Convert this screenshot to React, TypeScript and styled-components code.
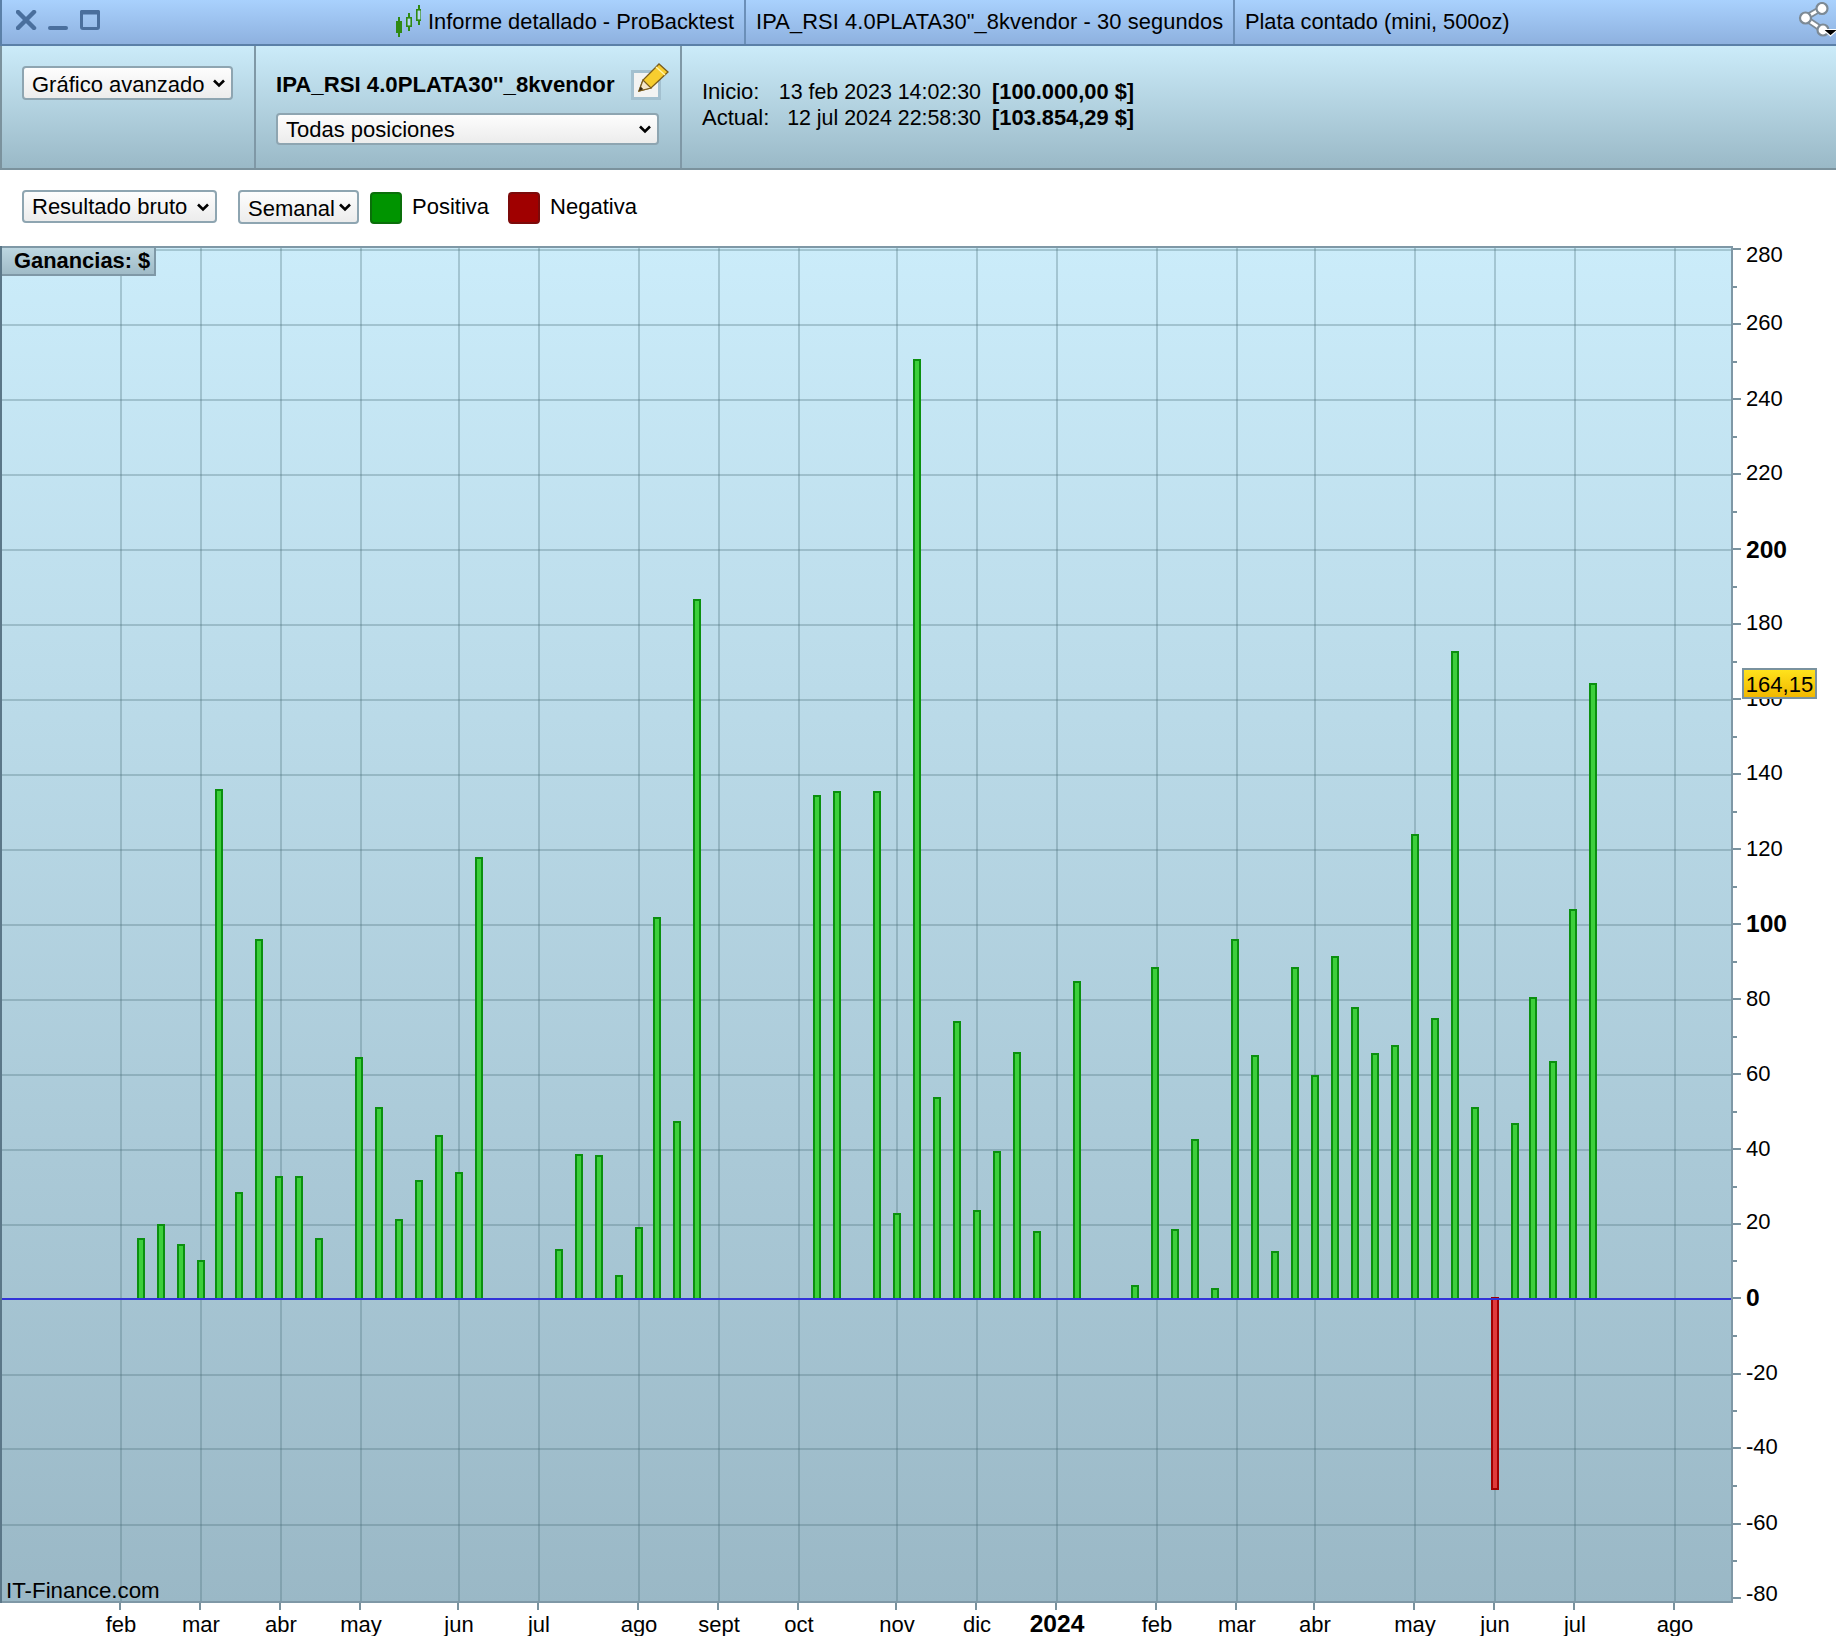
import React from "react";
import styled, { createGlobalStyle } from "styled-components";

const FONT = `"Liberation Sans", Arial, sans-serif`;

const Global = createGlobalStyle`
  html, body { margin: 0; padding: 0; background: #fff; }
  #root { width: 1836px; height: 1636px; overflow: hidden; }
  * { box-sizing: border-box; }
`;

const Page = styled.div`
  width: 1836px;
  height: 1636px;
  display: flex;
  flex-direction: column;
  font-family: ${FONT};
  color: #000;
  background: #fff;
  position: relative;
  overflow: hidden;
`;

const TitleBar = styled.header`
  height: 46px;
  flex: none;
  display: flex;
  align-items: stretch;
  background: linear-gradient(#a9d1fd, #8eb1df);
  border-bottom: 2px solid #5b80a8;
  border-left: 2px solid #5b80a8;
  font-size: 21.85px;
  position: relative;
`;

const WindowControls = styled.div`
  width: 393px;
  flex: none;
  padding: 10px 0 0 14px;
  display: flex;
  align-items: flex-start;
`;

const TitleTab = styled.div<{ $w: number; $pad: number; $border?: boolean; $track?: number }>`
  width: ${(p) => p.$w}px;
  padding-left: ${(p) => p.$pad}px;
  letter-spacing: ${(p) => p.$track ?? 0}px;
  display: flex;
  align-items: center;
  white-space: nowrap;
  flex: none;
  border-right: ${(p) => (p.$border ? "2px solid #6b8fb8" : "none")};
`;

const CandleSvg = styled.svg`
  flex: none;
  margin: -4px 7px 0 0;
`;

const ShareSlot = styled.div`
  position: absolute;
  right: 0;
  top: 2px;
  width: 38px;
  height: 36px;
`;

const Toolbar = styled.section`
  height: 124px;
  flex: none;
  display: flex;
  background: linear-gradient(#cbebf9, #9ab9c7);
  border-bottom: 2px solid #7b929d;
  border-left: 2px solid #7b929d;
  font-size: 22px;
`;

const FirstCell = styled.div`
  width: 254px;
  flex: none;
  display: flex;
  flex-direction: column;
  padding: 20px 0 0 20px;
  border-right: 2px solid #7f98a6;
`;

const StrategyCell = styled.div`
  width: 426px;
  flex: none;
  display: flex;
  flex-direction: column;
  padding: 18px 0 0 20px;
  border-right: 2px solid #7f98a6;
`;

const InfoCell = styled.div`
  flex: 1;
  display: flex;
  flex-direction: column;
  padding: 33px 0 0 20px;
  line-height: 26px;
`;

const NameRow = styled.div`
  display: flex;
  align-items: flex-start;
  height: 49px;
`;

const StrategyName = styled.span`
  font-weight: 700;
  font-size: 22.2px;
  margin-top: 8px;
  width: 355px;
  white-space: nowrap;
`;

const PencilSvg = styled.svg`
  flex: none;
  margin-top: -1px;
`;

const SelectWrap = styled.div<{ $w: number; $h: number; $ml?: number }>`
  position: relative;
  width: ${(p) => p.$w}px;
  height: ${(p) => p.$h}px;
  margin-left: ${(p) => p.$ml ?? 0}px;
  flex: none;
`;

const NativeSelect = styled.select<{ $pt?: number }>`
  appearance: none;
  width: 100%;
  height: 100%;
  padding: ${(p) => p.$pt ?? 0}px 0 0 8px;
  margin: 0;
  font-family: ${FONT};
  font-size: 22px;
  color: #000;
  background: linear-gradient(#fdfdfd, #ececec);
  border: 2px solid #8ea5b1;
  border-radius: 4px;
  outline: none;
`;

const Chevron = styled.svg`
  position: absolute;
  right: 7px;
  top: 50%;
  margin-top: -5px;
  width: 14px;
  height: 10px;
  pointer-events: none;
`;

const InfoRow = styled.div`
  display: flex;
  white-space: nowrap;
`;

const InfoLabel = styled.span`
  width: 76px;
`;

const InfoDate = styled.span`
  width: 203px;
  text-align: right;
  font-size: 21.4px;
`;

const InfoMoney = styled.b`
  margin-left: 11px;
  font-size: 21.85px;
`;

const FilterRow = styled.section`
  height: 76px;
  flex: none;
  display: flex;
  align-items: flex-start;
  padding: 20px 0 0 22px;
  font-size: 22px;
`;

const Swatch = styled.span<{ $bg: string; $edge: string; $ml?: number }>`
  width: 32px;
  height: 32px;
  flex: none;
  margin: 2px 0 0 ${(p) => p.$ml ?? 0}px;
  background: ${(p) => p.$bg};
  border: 2px solid ${(p) => p.$edge};
  border-radius: 4px;
`;

const Legend = styled.span`
  margin: 4px 19px 0 10px;
  line-height: 26px;
`;

const ChartArea = styled.section`
  position: relative;
  height: 1390px;
  flex: none;
`;

const ChartSvg = styled.svg`
  display: block;
`;

const ValueBadge = styled.div`
  position: absolute;
  left: 1742px;
  top: 422px;
  width: 75px;
  height: 31px;
  border: 2px solid #7a929e;
  background: linear-gradient(#ffe21c, #f1b800);
  font-size: 22px;
  line-height: 29px;
  text-align: center;
`;

const UnitBadge = styled.div`
  position: absolute;
  left: 2px;
  top: 2px;
  width: 154px;
  height: 28px;
  background: linear-gradient(#bcd6e0, #a0bbc7);
  border-right: 2px solid #7f98a6;
  border-bottom: 2px solid #7f98a6;
  font-weight: 700;
  font-size: 21.9px;
  line-height: 26px;
  padding-left: 12px;
  white-space: nowrap;
`;

const AxisText = styled.text<{ $bold?: boolean; $size?: number }>`
  font-family: ${FONT};
  font-size: ${(p) => p.$size ?? (p.$bold ? 24.6 : 22)}px;
  font-weight: ${(p) => (p.$bold ? 700 : 400)};
  fill: #000;
`;

const bars: [number, number][] = [
  [141, 1238], [161, 1224], [181, 1244], [201, 1260], [219, 789], [239, 1192], [259, 939], [279, 1176], [299, 1176], [319, 1238],
  [359, 1057], [379, 1107], [399, 1219], [419, 1180], [439, 1135], [459, 1172], [479, 857],
  [559, 1249], [579, 1154], [599, 1155], [619, 1275], [639, 1227], [657, 917], [677, 1121], [697, 599],
  [817, 795], [837, 791], [877, 791], [897, 1213], [917, 359], [937, 1097], [957, 1021], [977, 1210], [997, 1151], [1017, 1052], [1037, 1231],
  [1077, 981], [1135, 1285], [1155, 967], [1175, 1229], [1195, 1139], [1215, 1288], [1235, 939], [1255, 1055], [1275, 1251], [1295, 967],
  [1315, 1075], [1335, 956], [1355, 1007], [1375, 1053], [1395, 1045], [1415, 834], [1435, 1018], [1455, 651], [1475, 1107],
  [1515, 1123], [1533, 997], [1553, 1061], [1573, 909], [1593, 683],
];

const ZERO = 1299;
const yGrid = [250, 325, 400, 475, 550, 625, 700, 775, 850, 925, 1000, 1075, 1150, 1225, 1375, 1449, 1525];
const yTicks = [249, 324, 399, 474, 549, 624, 699, 774, 849, 924, 999, 1074, 1149, 1224, 1298, 1374, 1448, 1524, 1598];
const yLabels: [string, number, boolean?][] = [
  ["280", 254], ["260", 322], ["240", 398], ["220", 472], ["200", 550, true], ["180", 622], ["160", 698], ["140", 772], ["120", 848],
  ["100", 924, true], ["80", 998], ["60", 1073], ["40", 1148], ["20", 1221], ["0", 1298, true], ["-20", 1372], ["-40", 1446], ["-60", 1522], ["-80", 1593],
];
const months: [string, number, boolean?][] = [
  ["feb", 121], ["mar", 201], ["abr", 281], ["may", 361], ["jun", 459], ["jul", 539], ["ago", 639], ["sept", 719], ["oct", 799], ["nov", 897],
  ["dic", 977], ["2024", 1057, true], ["feb", 1157], ["mar", 1237], ["abr", 1315], ["may", 1415], ["jun", 1495], ["jul", 1575], ["ago", 1675],
];

function Arrow() {
  return (
    <Chevron viewBox="0 0 14 10">
      <path d="M2 2.5 L7 7.5 L12 2.5" fill="none" stroke="#000" strokeWidth="2.6" />
    </Chevron>
  );
}

function Select({ w, h, value, ml, pt }: { w: number; h: number; value: string; ml?: number; pt?: number }) {
  return (
    <SelectWrap $w={w} $h={h} $ml={ml}>
      <NativeSelect defaultValue={value} $pt={pt}>
        <option>{value}</option>
      </NativeSelect>
      <Arrow />
    </SelectWrap>
  );
}

function WindowIcons() {
  return (
    <svg width="84" height="20" viewBox="0 0 84 20">
      <path d="M2 2 L18 18 M18 2 L2 18" stroke="#4a6f9d" strokeWidth="4.5" strokeLinecap="round" fill="none" />
      <rect x="32" y="16" width="20" height="4" rx="2" fill="#4a6f9d" />
      <rect x="65.5" y="1.5" width="17" height="17" rx="1.5" fill="none" stroke="#4a6f9d" strokeWidth="3" />
      <rect x="64" y="0" width="20" height="4.5" rx="1.5" fill="#4a6f9d" />
    </svg>
  );
}

function CandleIcon() {
  return (
    <CandleSvg width="26" height="34" viewBox="0 0 26 34">
      <g stroke="#2f8a12" fill="none">
        <path d="M4 14 V34 M14 10 V28 M24 2 V22" strokeWidth="2" />
        <rect x="1" y="18" width="6" height="12" fill="#2f8a12" strokeWidth="0" />
        <rect x="11.8" y="14.8" width="4.4" height="8.4" fill="#b8d8f0" strokeWidth="1.6" />
        <rect x="21.8" y="6.8" width="4.4" height="10.4" fill="#b8d8f0" strokeWidth="1.6" />
      </g>
    </CandleSvg>
  );
}

function ShareIcon() {
  return (
    <svg width="38" height="36" viewBox="0 0 38 36">
      <path d="M24 6 L7 16 L25 28" stroke="#7d8a95" strokeWidth="6.5" fill="none" />
      <path d="M24 6 L7 16 L25 28" stroke="#fff" strokeWidth="3" fill="none" />
      <circle cx="24" cy="6.5" r="5.5" fill="#fff" stroke="#7d8a95" strokeWidth="2.2" />
      <circle cx="7.5" cy="16" r="5.5" fill="#fff" stroke="#7d8a95" strokeWidth="2.2" />
      <circle cx="25" cy="28" r="5.5" fill="#fff" stroke="#7d8a95" strokeWidth="2.2" />
      <path d="M25 27.5 H40 L32.5 34 Z" fill="#000" stroke="#fff" strokeWidth="1.2" />
    </svg>
  );
}

function PencilIcon() {
  return (
    <PencilSvg width="38" height="37" viewBox="0 0 38 37">
      <rect x="1.5" y="8.5" width="27" height="27" fill="#f3f3f2" stroke="#a3c0cf" strokeWidth="3" />
      <path d="M8 28 L12 17 L28 1 L37 9 L20 25 Z" fill="#f7cd2f" stroke="#7a5c1c" strokeWidth="1.3" />
      <path d="M25 4 L34 12" stroke="#fff2a8" strokeWidth="1.5" />
      <path d="M8 28 L12 17 L20 25 Z" fill="#f5e6c8" stroke="#7a5c1c" strokeWidth="1.2" />
      <path d="M8 28 L9.6 23.6 L12.4 26.2 Z" fill="#3a2a10" />
    </PencilSvg>
  );
}

function Chart() {
  const minor = yTicks.slice(0, -1).map((t, i) => Math.round((t + yTicks[i + 1]) / 2));
  return (
    <ChartSvg width="1836" height="1390" viewBox="0 246 1836 1390">
      <defs>
        <linearGradient id="plotBg" x1="0" y1="0" x2="0" y2="1">
          <stop offset="0" stopColor="#cbecfa" />
          <stop offset="1" stopColor="#9ab8c6" />
        </linearGradient>
      </defs>
      <rect x="0" y="246" width="1733" height="1357" fill="url(#plotBg)" />
      <g stroke="#4a6e78" strokeOpacity="0.3" strokeWidth="2">
        {months.map(([m, x], i) => (
          <line key={`${m}${i}`} x1={x} x2={x} y1="248" y2="1601" />
        ))}
        {yGrid.map((y) => (
          <line key={y} x1="2" x2="1731" y1={y} y2={y} />
        ))}
      </g>
      <g stroke="#0b900f" strokeWidth="2" fill="#3dcf3c">
        {bars.map(([x, top]) => (
          <rect key={x} x={x - 3} y={top + 1} width="6" height={ZERO - top - 1} />
        ))}
      </g>
      <rect x="1492" y="1298" width="6" height="191" fill="#e03b3b" stroke="#a00000" strokeWidth="2" />
      <line x1="2" x2="1732" y1="1299" y2="1299" stroke="#3233d8" strokeWidth="2" />
      <rect x="0" y="246" width="1733" height="2" fill="#7f98a6" />
      <rect x="0" y="1601" width="1733" height="2" fill="#7f98a6" />
      <rect x="0" y="246" width="2" height="1357" fill="#5b7788" />
      <rect x="1731" y="246" width="2" height="1357" fill="#7f98a6" />
      <g fill="#7a929e">
        {yTicks.map((y) => (
          <rect key={y} x="1733" y={y - 1} width="8" height="2" />
        ))}
        {minor.map((y) => (
          <rect key={y} x="1733" y={y - 1} width="4" height="2" />
        ))}
        {months.map(([m, x], i) => (
          <rect key={`${m}${i}`} x={x - 2} y="1603" width="2" height="7" />
        ))}
      </g>
      {yLabels.map(([t, y, bold]) => (
        <AxisText key={t} x="1746" y={y + 8} $bold={bold}>
          {t}
        </AxisText>
      ))}
      {months.map(([m, x, bold], i) => (
        <AxisText key={`${m}${i}`} x={x} y="1632" textAnchor="middle" $bold={bold}>
          {m}
        </AxisText>
      ))}
      <AxisText x="6" y="1598" $size={22.3}>IT-Finance.com</AxisText>
    </ChartSvg>
  );
}

export default function App() {
  return (
    <Page>
      <Global />
      <TitleBar>
        <WindowControls>
          <WindowIcons />
        </WindowControls>
        <TitleTab $w={351} $pad={0} $border>
          <CandleIcon />
          Informe detallado - ProBacktest
        </TitleTab>
        <TitleTab $w={489} $pad={10} $border $track={0.1}>
          IPA_RSI 4.0PLATA30"_8kvendor - 30 segundos
        </TitleTab>
        <TitleTab $w={400} $pad={10} $track={-0.05}>
          Plata contado (mini, 500oz)
        </TitleTab>
        <ShareSlot>
          <ShareIcon />
        </ShareSlot>
      </TitleBar>
      <Toolbar>
        <FirstCell>
          <Select w={211} h={34} pt={2} value="Gráfico avanzado" />
        </FirstCell>
        <StrategyCell>
          <NameRow>
            <StrategyName>IPA_RSI 4.0PLATA30''_8kvendor</StrategyName>
            <PencilIcon />
          </NameRow>
          <Select w={383} h={32} value="Todas posiciones" />
        </StrategyCell>
        <InfoCell>
          <InfoRow>
            <InfoLabel>Inicio:</InfoLabel>
            <InfoDate>13 feb 2023 14:02:30</InfoDate>
            <InfoMoney>[100.000,00 $]</InfoMoney>
          </InfoRow>
          <InfoRow>
            <InfoLabel>Actual:</InfoLabel>
            <InfoDate>12 jul 2024 22:58:30</InfoDate>
            <InfoMoney>[103.854,29 $]</InfoMoney>
          </InfoRow>
        </InfoCell>
      </Toolbar>
      <FilterRow>
        <Select w={195} h={33} value="Resultado bruto" />
        <Select w={121} h={34} pt={2} ml={21} value="Semanal" />
        <Swatch $bg="#009400" $edge="#0a6f0a" $ml={11} />
        <Legend>Positiva</Legend>
        <Swatch $bg="#a00000" $edge="#7c0a0a" />
        <Legend>Negativa</Legend>
      </FilterRow>
      <ChartArea>
        <Chart />
        <UnitBadge>Ganancias: $</UnitBadge>
        <ValueBadge>164,15</ValueBadge>
      </ChartArea>
    </Page>
  );
}
